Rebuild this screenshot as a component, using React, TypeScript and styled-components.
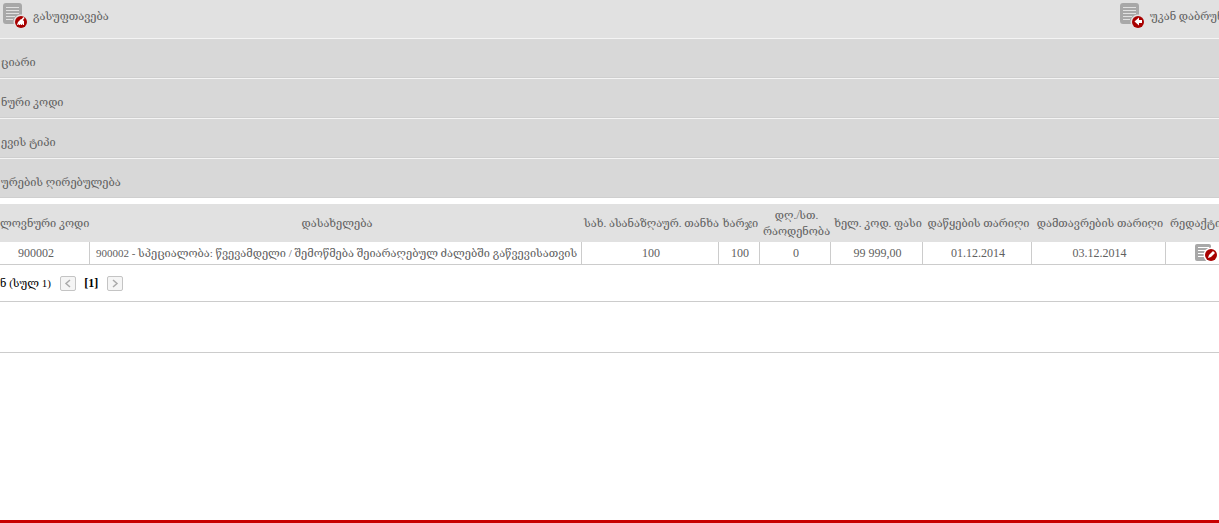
import React from 'react';
import styled, { createGlobalStyle } from 'styled-components';

const GlobalStyle = createGlobalStyle`
  * { box-sizing: border-box; }
  body {
    margin: 0;
    background: #fff;
    color: #606060;
    font: 11px/16px "Liberation Serif", "DejaVu Serif", serif;
    overflow-x: hidden;
  }
`;

const Page = styled.div`
  display: flex;
  flex-direction: column;
  min-height: 100vh;
  overflow: hidden;
`;

const Toolbar = styled.header`
  display: flex;
  justify-content: space-between;
  height: 38px;
  padding-left: 2px;
  background: #e1e1e1;
`;

const ToolButton = styled.button`
  display: flex;
  align-items: center;
  gap: 4px;
  height: 32px;
  padding: 0;
  border: 0;
  background: none;
  color: inherit;
  font: inherit;
  white-space: nowrap;
  cursor: pointer;
  svg { flex: none; }
`;

const BackButton = styled(ToolButton)`
  width: 100px;
`;

const FilterRow = styled.div`
  height: 40px;
  padding: 15px 0 0 1px;
  border-top: 1px solid #f4f4f4;
  border-bottom: 1px solid #cfcfcf;
  background: #d8d8d8;
`;

const Table = styled.table`
  width: 100%;
  margin-top: 6px;
  border-collapse: separate;
  border-spacing: 0;
  table-layout: fixed;
`;

const Col = styled.col<{ $width?: number }>`
  width: ${({ $width }) => ($width ? `${$width}px` : 'auto')};
`;

const HeadCell = styled.th`
  height: 38px;
  padding: 0 0 0 2px;
  background: #e1e1e1;
  font-weight: normal;
  white-space: nowrap;
  &:first-child { text-align: left; padding-left: 0; }
  &:last-child { text-align: left; padding-left: 4px; }
`;

const Cell = styled.td<{ $numeric?: boolean }>`
  height: 23px;
  padding: 0 0 0 2px;
  border-right: 1px solid #ccc;
  border-bottom: 1px solid #ccc;
  font-size: ${({ $numeric }) => ($numeric ? '12px' : '11px')};
  text-align: center;
  white-space: nowrap;
  &:first-child { padding: 0 17px 0 0; }
  &:last-child { padding-left: 28px; border-right: 0; text-align: left; }
`;

const IconButton = styled.button`
  display: block;
  height: 20px;
  padding: 0;
  border: 0;
  background: none;
  cursor: pointer;
`;

const Pager = styled.nav`
  display: flex;
  align-items: center;
  gap: 7px;
  height: 36px;
  color: #000;
`;

const Total = styled.span`
  padding: 0 2px 0 0;
`;

const CurrentPage = styled.b`
  min-width: 17px;
  font-size: 12px;
  text-align: center;
`;

const PageButton = styled.button`
  display: flex;
  align-items: center;
  justify-content: center;
  width: 16px;
  height: 15px;
  padding: 0;
  border: 1px solid #c4c4c4;
  border-radius: 2px;
  background: #f5f5f5;
`;

const Strip = styled.div`
  height: 52px;
  border-top: 1px solid #ccc;
  border-bottom: 1px solid #ccc;
`;

const Footer = styled.footer`
  height: 3px;
  margin-top: auto;
  background: #c80000;
`;

type Badge = 'clean' | 'back';

const marks: Record<Badge, React.ReactNode> = {
  clean: (
    <>
      <path d="M15 24l1-3 3-3 3 2v4h-1l-.5-1.500L20 24h-1l-.5-1-.8 1h-.8l-.4-1-.8 1z" />
      <path d="M19.500 19.500L22 16.500" stroke="#fff" strokeWidth="1.500" />
    </>
  ),
  back: <path d="M15.500 20.500l4.500-4v2.500h3v3h-3v2.500z" />,
};

const PageIcon = ({ badge }: { badge: Badge }) => (
  <svg width="27" height="30" viewBox="0 0 27 30" aria-hidden="true">
    <rect x="1" y="2" width="19" height="21" rx="3" fill="#a8a8a8" />
    <path d="M4 6.500h13M4 9.500h13M4 12.500h13M4 15.500h9M4 18.500h7" stroke="#e1e1e1" />
    <circle cx="19" cy="21" r="7.500" fill="#e1e1e1" />
    <circle cx="19" cy="21" r="6" fill="#a80000" />
    <g fill="#fff">{marks[badge]}</g>
  </svg>
);

const EditIcon = () => (
  <svg width="25" height="20" viewBox="0 0 25 20" aria-hidden="true">
    <rect x="1" y="1" width="16" height="17" rx="2" fill="#a8a8a8" />
    <path d="M4 4.500h11M4 7.500h10M4 10.500h8M4 13.500h6" stroke="#fff" />
    <circle cx="17" cy="12" r="7.500" fill="#fff" />
    <circle cx="17" cy="12" r="6" fill="#a80000" />
    <path d="M14 15l1-3 4-4 2 2-4 4z" fill="#fff" />
  </svg>
);

const Chevron = ({ d }: { d: string }) => (
  <svg width="8" height="9" viewBox="0 0 8 9" fill="none" stroke="#aaa" strokeWidth="1.500" aria-hidden="true">
    <path d={d} />
  </svg>
);

const filters = ['ციარი', 'ნური კოდი', 'ევის ტიპი', 'ურების ღირებულება'];
const widths = [90, undefined, 137, 41, 71, 92, 109, 134, 53];
const heads = [
  'ლოვნური კოდი', 'დასახელება', 'სახ. ასანაზღაურ. თანხა', 'ხარჯი', 'დღ./სთ.\nრაოდენობა',
  'ხელ. კოდ. ფასი', 'დაწყების თარიღი', 'დამთავრების თარიღი', 'რედაქტი',
];
const values = [
  '900002',
  '900002 - სპეციალობა: წვევამდელი / შემოწმება შეიარაღებულ ძალებში გაწვევისათვის',
  '100', '100', '0', '99 999,00', '01.12.2014', '03.12.2014',
];

export default function App() {
  return (
    <Page>
      <GlobalStyle />
      <Toolbar>
        <ToolButton type="button"><PageIcon badge="clean" />გასუფთავება</ToolButton>
        <BackButton type="button"><PageIcon badge="back" />უკან დაბრუნ</BackButton>
      </Toolbar>
      {filters.map((label) => <FilterRow key={label}>{label}</FilterRow>)}
      <Table>
        <colgroup>{widths.map((w, i) => <Col key={i} $width={w} />)}</colgroup>
        <thead>
          <tr>
            {heads.map((head) => (
              <HeadCell key={head} scope="col">
                {head.split('\n').map((line, i) => <React.Fragment key={line}>{i > 0 && <br />}{line}</React.Fragment>)}
              </HeadCell>
            ))}
          </tr>
        </thead>
        <tbody>
          <tr>
            {values.map((value, i) => <Cell key={i} $numeric={i !== 1}>{value}</Cell>)}
            <Cell><IconButton type="button" aria-label="რედაქტირება"><EditIcon /></IconButton></Cell>
          </tr>
        </tbody>
      </Table>
      <Pager>
        <Total>ნ (სულ 1)</Total>
        <PageButton type="button" aria-label="წინა"><Chevron d="M6 1L2 4.500L6 8" /></PageButton>
        <CurrentPage>[1]</CurrentPage>
        <PageButton type="button" aria-label="შემდეგი"><Chevron d="M2 1l4 3.500L2 8" /></PageButton>
      </Pager>
      <Strip />
      <Footer />
    </Page>
  );
}
